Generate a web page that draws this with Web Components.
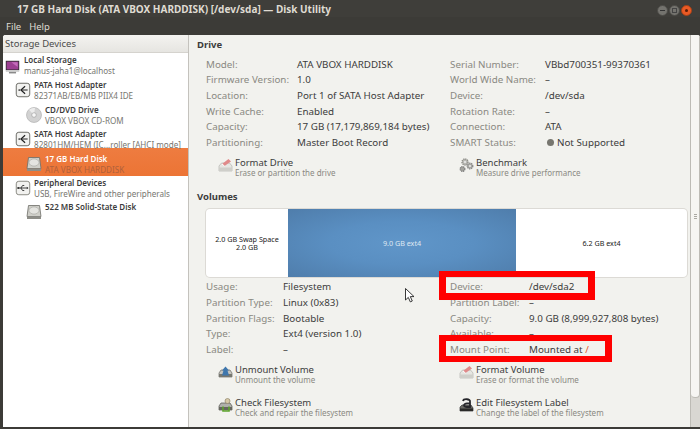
<!DOCTYPE html>
<html>
<head>
<meta charset="utf-8">
<title>Disk Utility</title>
<style>
html, body { margin: 0; height: 100%; background: #3c3b37; }
body { font: 9px "Noto Sans", "Open Sans", sans-serif; color: #3c3c3c; overflow: hidden; }
</style>
</head>
<body>
<x-window>
  <x-sidebar slot="side">
    <x-tree-row level="0" icon="computer" name="Local Storage" sub="manus-jaha1@localhost"></x-tree-row>
    <x-tree-row level="1" icon="adapter" name="PATA Host Adapter" sub="82371AB/EB/MB PIIX4 IDE"></x-tree-row>
    <x-tree-row level="2" icon="cdrom" name="CD/DVD Drive" sub="VBOX VBOX CD-ROM"></x-tree-row>
    <x-tree-row level="1" icon="adapter" name="SATA Host Adapter" sub="82801HM/HEM (IC...roller [AHCI mode]"></x-tree-row>
    <x-tree-row level="2" icon="disk" name="17 GB Hard Disk" sub="ATA VBOX HARDDISK" selected></x-tree-row>
    <x-tree-row level="1" icon="usb" name="Peripheral Devices" sub="USB, FireWire and other peripherals"></x-tree-row>
    <x-tree-row level="2" icon="disk" name="522 MB Solid-State Disk"></x-tree-row>
  </x-sidebar>
  <x-section slot="main" heading="Drive">
    <x-props value-at="91" slot="left">
      <x-prop label="Model:">ATA VBOX HARDDISK</x-prop>
      <x-prop label="Firmware Version:">1.0</x-prop>
      <x-prop label="Location:">Port 1 of SATA Host Adapter</x-prop>
      <x-prop label="Write Cache:">Enabled</x-prop>
      <x-prop label="Capacity:">17 GB (17,179,869,184 bytes)</x-prop>
      <x-prop label="Partitioning:">Master Boot Record</x-prop>
    </x-props>
    <x-props value-at="95" slot="right">
      <x-prop label="Serial Number:">VBbd700351-99370361</x-prop>
      <x-prop label="World Wide Name:">–</x-prop>
      <x-prop label="Device:">/dev/sda</x-prop>
      <x-prop label="Rotation Rate:">–</x-prop>
      <x-prop label="Connection:">ATA</x-prop>
      <x-prop label="SMART Status:"><span style="display:inline-block;width:7px;height:7px;border-radius:50%;background:#77766f;margin:0 3px 0 2px"></span>Not Supported</x-prop>
    </x-props>
    <x-action slot="left-actions" icon="format" name="Format Drive" sub="Erase or partition the drive"></x-action>
    <x-action slot="right-actions" icon="gears" name="Benchmark" sub="Measure drive performance"></x-action>
  </x-section>
  <x-section slot="main" heading="Volumes" class="vol">
    <x-volume-bar slot="bar"></x-volume-bar>
    <x-props value-at="77" slot="left">
      <x-prop label="Usage:">Filesystem</x-prop>
      <x-prop label="Partition Type:">Linux (0x83)</x-prop>
      <x-prop label="Partition Flags:">Bootable</x-prop>
      <x-prop label="Type:">Ext4 (version 1.0)</x-prop>
      <x-prop label="Label:">–</x-prop>
    </x-props>
    <x-props value-at="79" slot="right">
      <x-prop label="Device:">/dev/sda2</x-prop>
      <x-prop label="Partition Label:">–</x-prop>
      <x-prop label="Capacity:">9.0 GB (8,999,927,808 bytes)</x-prop>
      <x-prop label="Available:">–</x-prop>
      <x-prop label="Mount Point:">Mounted at <span style="color:#e2562a">/</span></x-prop>
    </x-props>
    <x-action slot="left-actions" icon="unmount" name="Unmount Volume" sub="Unmount the volume"></x-action>
    <x-action slot="left-actions" icon="check" name="Check Filesystem" sub="Check and repair the filesystem"></x-action>
    <x-action slot="right-actions" icon="format" name="Format Volume" sub="Erase or format the volume"></x-action>
    <x-action slot="right-actions" icon="label" name="Edit Filesystem Label" sub="Change the label of the filesystem"></x-action>
  </x-section>
</x-window>

<script>
const ICONS = {
  computer: `<svg viewBox="0 0 19 19"><rect x="1" y="1" width="17" height="12" fill="#2b2b2b"/><rect x="2" y="2" width="15" height="10" fill="#9c3f92"/><path d="M8 3l8 0 0 6z" fill="#c46bbb"/><rect x="1" y="13" width="17" height="2" fill="#cfcfcf"/><rect x="5" y="15" width="9" height="2" fill="#8a8a8a"/></svg>`,
  adapter: `<svg viewBox="0 0 19 19"><rect x="1.500" y="1.500" width="16" height="16" rx="3" fill="#f2f2f0" stroke="#55554f"/><path d="M12 5L7 9.500l5 4.500" fill="none" stroke="#222" stroke-width="1.400"/><path d="M8 9.500h7" stroke="#222" stroke-width="1.200"/><circle cx="5" cy="9.500" r="1" fill="#222"/></svg>`,
  usb: `<svg viewBox="0 0 19 19"><rect x="1.500" y="1.500" width="16" height="16" rx="3" fill="#f2f2f0" stroke="#77776f"/><path d="M3 9.500h12M7 9.500l2-3h2M7 9.500l2 3h2" fill="none" stroke="#333" stroke-width="1.100"/><circle cx="4" cy="9.500" r="1.300" fill="#333"/><path d="M14 8l2 1.500-2 1.500z" fill="#333"/></svg>`,
  cdrom: `<svg viewBox="0 0 16 16"><circle cx="8" cy="8" r="7.500" fill="#d2d2d2" stroke="#aaa" stroke-width=".6"/><path d="M8 8L3 2.800A7 7 0 0 1 9 1z" fill="#ececec"/><circle cx="8" cy="8" r="2.300" fill="#f7f7f7" stroke="#999" stroke-width=".6"/></svg>`,
  disk: `<svg viewBox="0 0 16 16"><path d="M2.500 1.500h11L15 12.500H1z" fill="#cfcfc9" stroke="#6c6c66" stroke-width=".8"/><ellipse cx="8" cy="6.500" rx="5" ry="3.600" fill="#e4e4e0" stroke="#9a9a94" stroke-width=".5"/><rect x="1" y="12.500" width="14" height="2.500" fill="#8e8e88"/></svg>`,
  format: `<svg viewBox="0 0 15 14"><path d="M1 8l2.500-3h8L14 8v5H1z" fill="#e6e6e2" stroke="#b5b5b0" stroke-width=".7"/><rect x="1" y="9.500" width="13" height="3.500" fill="#cfcfca"/><path d="M4 6l6.500-5 2.500 2.500-6.500 4.500z" fill="#e08a8a"/><path d="M4 6l2.500 2" stroke="#fff"/></svg>`,
  gears: `<svg viewBox="0 0 15 14"><circle cx="6" cy="4" r="3" fill="#b9b9b4" stroke="#8d8d88" stroke-width="1.400" stroke-dasharray="1.200 .8"/><circle cx="11" cy="8" r="2.800" fill="#a8a8a3" stroke="#888" stroke-width="1.300" stroke-dasharray="1.200 .8"/><circle cx="3.500" cy="11" r="2.400" fill="#a3a39e" stroke="#777" stroke-width="1.100" stroke-dasharray="1.100 .7"/><circle cx="11" cy="8" r="1" fill="#eee"/><circle cx="6" cy="4" r="1" fill="#eee"/></svg>`,
  unmount: `<svg viewBox="0 0 15 14"><path d="M1 8l2-3h9l2 3v4H1z" fill="#c4c4bf" stroke="#6a6a64" stroke-width=".7"/><rect x="1" y="9" width="13" height="3" fill="#77776f"/><path d="M7.500 1.500l3.500 4h-1.500l1.500 5H4l1.500-5H4z" fill="#3f77ad"/></svg>`,
  check: `<svg viewBox="0 0 15 14"><path d="M1 8l2-3h9l2 3v4H1z" fill="#b0b0ab" stroke="#55554f" stroke-width=".7"/><rect x="1" y="9" width="13" height="3" fill="#66665f"/><circle cx="9.500" cy="3" r="2.500" fill="#d6c9a8" stroke="#8f8468" stroke-width=".7"/><path d="M5 8.500v4.500h6V8.500" fill="none" stroke="#5ea52c" stroke-width="1.600"/></svg>`,
  label: `<svg viewBox="0 0 15 14"><path d="M1 9l2-2h9l2 3v3H1z" fill="#6a6a64" stroke="#333" stroke-width=".7"/><rect x="1" y="10.500" width="13" height="2.500" fill="#2a2a28"/><path d="M4 3a3.500 2 0 0 1 7 .5V9H8a3 1.800 0 1 1 0-3.600h3" fill="none" stroke="#26262a" stroke-width="1.800"/></svg>`
};

class XWindow extends HTMLElement {
  constructor() {
    super();
    this.attachShadow({ mode: 'open' });
    this.shadowRoot.innerHTML = `
      <style>
        :host { display: flex; flex-direction: column; width: 700px; height: 429px; position: relative; overflow: hidden; background: #3c3b37; }
        .title { height: 17px; flex: none; display: flex; align-items: center; padding: 0 8px 0 17px; color: #dfdbd2; font-weight: 700; font-size: 10px; background: #3f3e3a; }
        .title span { flex: 1; white-space: nowrap; }
        .btns { display: flex; gap: 1px; margin-top: 4px; }
        .btns i { width: 9px; height: 9px; border-radius: 50%; background: #74736e; border: 1px solid #4c4b47; display: flex; align-items: center; justify-content: center; }
        .btns i b { display: block; width: 5px; height: 1px; background: #333; }
        .btns i.box b { height: 3px; background: none; border: 1px solid #444; width: 3px; }
        .btns i.close { background: #e95a25; border-color: #a64118; }
        .btns i.close b { width: 3px; height: 3px; background: #5a1c08; border-radius: 50%; }
        .menu { height: 18px; flex: none; display: flex; gap: 8px; align-items: center; padding: 0 6px; color: #dfdbd2; font-size: 9.500px; background: #3c3b37; }
        .body { flex: 1; min-height: 0; display: flex; margin: 0 0 2px 3px; background: #f2f2ee; border-radius: 3px 3px 0 0; overflow: hidden; }
        .side { width: 185px; flex: none; border-right: 1px solid #c4c2bd; background: #fff; }
        .main { flex: 1; min-width: 0; padding: 0 0 0 8px; display: flex; flex-direction: column; position: relative; }
        .scroll { width: 9px; flex: none; background: #d9d7d2; border-left: 1px solid #bdbbb5; display: flex; flex-direction: column; }
        .thumb { margin: 0 0 29px 0; flex: 1; border-radius: 0 0 4px 4px; background: #f6f5f2; border: 1px solid #bdbbb5; border-top: none; border-left: none; display: flex; align-items: center; justify-content: center; }
        .grip { width: 3px; height: 5px; background: repeating-linear-gradient(#aaa8a2 0 1px, transparent 1px 2px); }
        .mark { position: absolute; box-sizing: border-box; border: solid #f00; border-width: 6px 7px 7px; }
        .cursor { position: absolute; left: 405px; top: 288px; }
      </style>
      <div class="title"><span>17 GB Hard Disk (ATA VBOX HARDDISK) [/dev/sda] — Disk Utility</span>
        <div class="btns"><i><b></b></i><i class="box"><b></b></i><i class="close"><b></b></i></div></div>
      <div class="menu"><span>File</span><span>Help</span></div>
      <div class="body">
        <div class="side"><slot name="side"></slot></div>
        <div class="main"><slot name="main"></slot></div>
        <div class="scroll"><div class="thumb"><div class="grip"></div></div></div>
      </div>
      <div class="mark" style="left:439px;top:271px;width:156px;height:29px"></div>
      <div class="mark" style="left:439px;top:335px;width:173px;height:27px;border-bottom-width:6px"></div>
      <svg class="cursor" width="11" height="15" viewBox="0 0 11 15"><path d="M.5.500v11.500l2.800-2.600 2 4.500 2-.9-2-4.400h3.700z" fill="#fff" stroke="#222" stroke-width=".9"/></svg>`;
  }
}

class XSidebar extends HTMLElement {
  constructor() {
    super();
    this.attachShadow({ mode: 'open' });
    this.shadowRoot.innerHTML = `
      <style>
        :host { display: flex; flex-direction: column; height: 100%; }
        .head { height: 17px; flex: none; display: flex; align-items: center; padding-left: 2px; color: #4c4c4c; background: linear-gradient(#f4f3f0, #e6e5e1); border-bottom: 1px solid #d5d3ce; font-size: 9.500px; }
        .list { padding-top: 1px; }
      </style>
      <div class="head">Storage Devices</div>
      <div class="list"><slot></slot></div>`;
  }
}

class XTreeRow extends HTMLElement {
  // per level: left padding, icon size, gap to text
  static lv = [[2, 15, 4], [12, 16, 3], [23, 16, 3]];
  constructor() {
    super();
    this.attachShadow({ mode: 'open' });
  }
  connectedCallback() {
    const lvl = +this.getAttribute('level');
    const sub = this.getAttribute('sub');
    const sel = this.hasAttribute('selected');
    const [pad, size, gap] = XTreeRow.lv[lvl];
    const top = lvl == 0 ? 0 : 1;
    this.shadowRoot.innerHTML = `
      <style>
        :host { display: flex; height: 24.400px; align-items: flex-start; box-sizing: border-box; padding: ${top}px 0 0 ${pad}px; gap: ${gap}px; }
        :host([selected]) { height: 28px; margin-top: -3.600px; padding-top: 4.600px; background: linear-gradient(#ee7c40, #ec7435); }
        .ic { width: ${size}px; flex: none; margin-top: ${lvl == 0 ? 6 : 3}px; }
        svg { display: block; width: ${size}px; height: ${size}px; }
        .n { font-weight: 600; font-size: 8px; color: ${sel ? '#fff' : '#3c3c3c'}; line-height: 11px; white-space: nowrap; }
        .s { font-size: 8.100px; color: ${sel ? '#b0613c' : '#77766f'}; line-height: 11px; white-space: nowrap; }
      </style>
      <div class="ic">${ICONS[this.getAttribute('icon')]}</div>
      <div><div class="n">${this.getAttribute('name')}</div>${sub ? `<div class="s">${sub}</div>` : ''}</div>`;
  }
}

class XSection extends HTMLElement {
  constructor() {
    super();
    this.attachShadow({ mode: 'open' });
  }
  connectedCallback() {
    const vol = this.classList.contains('vol');
    this.shadowRoot.innerHTML = `
      <style>
        :host { display: block; padding-top: ${vol ? 11 : 3}px; }
        h2 { margin: 0; font-size: 9.500px; font-weight: 700; color: #3c3c3c; line-height: 13px; }
        .cols { display: grid; grid-template-columns: 244px 1fr; padding-left: 9px; margin-top: ${vol ? 3 : -1}px; }
        .acts { display: grid; grid-template-columns: 241px 1fr; padding: 6px 0 0 21px; }
        .acts > div { display: flex; flex-direction: column; gap: 11px; }
        .bar { padding: ${vol ? 6 : 7}px 3px 0 9px; }
      </style>
      <h2>${this.getAttribute('heading')}</h2>
      <div class="bar"><slot name="bar"></slot></div>
      <div class="cols"><slot name="left"></slot><slot name="right"></slot></div>
      <div class="acts"><div><slot name="left-actions"></slot></div><div><slot name="right-actions"></slot></div></div>`;
  }
}

class XProps extends HTMLElement {
  constructor() {
    super();
    this.attachShadow({ mode: 'open' });
    this.shadowRoot.innerHTML = `<style>:host { display: block; }</style><slot></slot>`;
  }
  connectedCallback() {
    this.style.setProperty('--value-at', this.getAttribute('value-at') + 'px');
  }
}

class XProp extends HTMLElement {
  constructor() {
    super();
    this.attachShadow({ mode: 'open' });
  }
  connectedCallback() {
    this.shadowRoot.innerHTML = `
      <style>
        :host { display: grid; grid-template-columns: var(--value-at) 1fr; height: 15.600px; align-items: center; font-size: 9.800px; line-height: 12px; white-space: nowrap; }
        .l { color: #8a8982; }
        .v { color: #3c3c3c; }
      </style>
      <div class="l">${this.getAttribute('label')}</div><div class="v"><slot></slot></div>`;
  }
}

class XAction extends HTMLElement {
  constructor() {
    super();
    this.attachShadow({ mode: 'open' });
  }
  connectedCallback() {
    this.shadowRoot.innerHTML = `
      <style>
        :host { display: flex; gap: 2px; height: 22px; }
        .ic { width: 15px; flex: none; margin-top: 1px; }
        svg { display: block; width: 15px; height: 14px; }
        .n { font-size: 9.500px; color: #3c3c3c; line-height: 11px; white-space: nowrap; }
        .s { font-size: 8px; color: #8a8982; line-height: 10px; white-space: nowrap; }
      </style>
      <div class="ic">${ICONS[this.getAttribute('icon')]}</div>
      <div><div class="n">${this.getAttribute('name')}</div><div class="s">${this.getAttribute('sub')}</div></div>`;
  }
}

class XVolumeBar extends HTMLElement {
  constructor() {
    super();
    this.attachShadow({ mode: 'open' });
    this.shadowRoot.innerHTML = `
      <style>
        :host { display: flex; height: 68px; border-radius: 4px; overflow: hidden; font-size: 7.200px; text-align: center; line-height: 8px; background: #fff; box-shadow: 0 0 0 1px #dcdad5; color: #222; }
        div { display: flex; align-items: center; justify-content: center; }
        .a { width: 82px; }
        .b { width: 228px; color: #dfe8f2; background: radial-gradient(ellipse at center, #6096c9 0%, #5a8fc2 45%, #4f7dab 100%); }
        .c { flex: 1; }
      </style>
      <div class="a">2.0 GB Swap Space<br>2.0 GB</div>
      <div class="b">9.0 GB ext4</div>
      <div class="c">6.2 GB ext4</div>`;
  }
}

customElements.define('x-window', XWindow);
customElements.define('x-sidebar', XSidebar);
customElements.define('x-tree-row', XTreeRow);
customElements.define('x-section', XSection);
customElements.define('x-props', XProps);
customElements.define('x-prop', XProp);
customElements.define('x-action', XAction);
customElements.define('x-volume-bar', XVolumeBar);
</script>
</body>
</html>
